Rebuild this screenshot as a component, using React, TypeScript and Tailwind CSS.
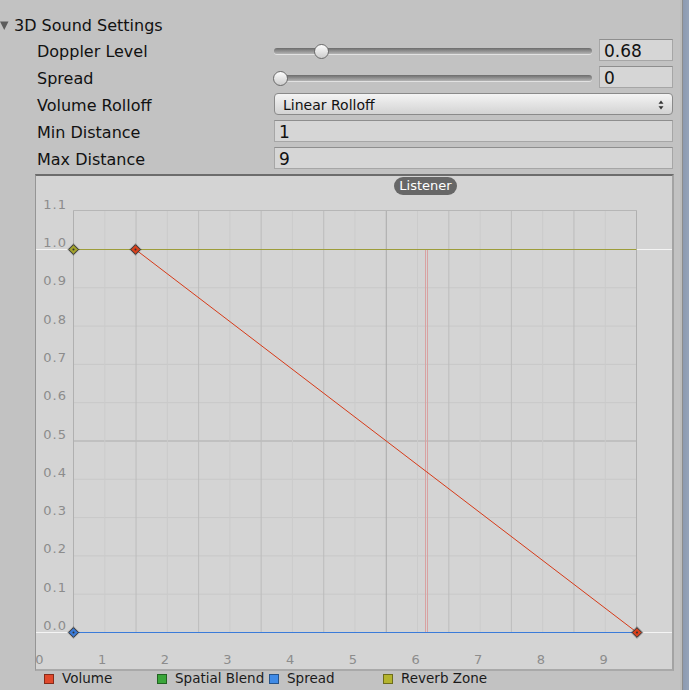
import React from "react";

const rows = [
  { label: "Doppler Level", kind: "slider", value: 0.68, max: 5, text: "0.68" },
  { label: "Spread", kind: "slider", value: 0, max: 360, text: "0" },
  { label: "Volume Rolloff", kind: "select", text: "Linear Rolloff" },
  { label: "Min Distance", kind: "field", text: "1" },
  { label: "Max Distance", kind: "field", text: "9" },
];

const legend = [
  { name: "Volume", color: "bg-[#e0492c]", w: "w-[113px]" },
  { name: "Spatial Blend", color: "bg-[#3aa63a]", w: "w-[112px]" },
  { name: "Spread", color: "bg-[#3f8ae6]", w: "w-[114px]" },
  { name: "Reverb Zone", color: "bg-[#b4b42e]", w: "w-[114px]" },
];

function Field({ text, className = "" }: { text: string; className?: string }) {
  return (
    <div
      className={`flex h-full items-center border border-[#a6a6a6] border-t-[#8e8e8e] bg-[#d6d6d6] pl-[4px] pt-[3px] text-[17px] text-[#111] ${className}`}
    >
      {text}
    </div>
  );
}

function Slider({ value, max, text }: { value: number; max: number; text: string }) {
  const left = (value / max) * 303 - 1;
  return (
    <div className="flex h-full items-center gap-[7px]">
      <div className="relative h-full w-[318px]">
        <div className="absolute left-0 right-0 top-[9px] h-[6px] rounded-full bg-gradient-to-b from-[#6c6c6c] to-[#b4b4b4] shadow-[0_1px_0_#e2e2e2]" />
        <div
          className="absolute top-[5px] h-[15px] w-[15px] rounded-full border border-[#6a6a6a] bg-gradient-to-b from-[#fdfdfd] to-[#cdcdcd]"
          style={{ left }}
        />
      </div>
      <Field text={text} className="w-[74px]" />
    </div>
  );
}

function Select({ text }: { text: string }) {
  return (
    <div className="flex h-full items-center justify-between rounded-[4px] border border-[#8a8a8a] bg-gradient-to-b from-[#f4f4f4] to-[#d3d3d3] pl-[8px] pr-[8px] text-[14px] text-[#111]">
      <span className="pt-[2px]">{text}</span>
      <svg width="6" height="10" viewBox="0 0 6 10" className="mt-[1px]">
        <path d="M3 0.5L5.5 3.8H0.5Z" fill="#333" />
        <path d="M3 9.5L5.5 6.2H0.5Z" fill="#333" />
      </svg>
    </div>
  );
}

function Key({ x, y, fill }: { x: number; y: number; fill: string }) {
  return (
    <g>
      <path d={`M${x} ${y - 6.5}L${x + 6.5} ${y}L${x} ${y + 6.5}L${x - 6.5} ${y}Z`} fill="#000" opacity={0.22} />
      <path
        d={`M${x} ${y - 4.8}L${x + 4.8} ${y}L${x} ${y + 4.8}L${x - 4.8} ${y}Z`}
        fill={fill}
        stroke="#333"
        strokeWidth={1}
      />
      <circle cx={x} cy={y} r={1} fill="#333" />
    </g>
  );
}

function Graph() {
  const L = 73.5;
  const R = 636.5;
  const Z = 632.5;
  const U = 38.3;
  const top = 210.5;
  const one = Z - 10 * U;
  const xs = Array.from({ length: 19 }, (_, i) => L + (i * (R - L)) / 18);
  const ys = Array.from({ length: 11 }, (_, k) => Z - k * U);

  return (
    <svg width="636" height="493" viewBox="36 176 636 493" className="block">
      {/* grid */}
      {ys.map((y, k) => (
        <line
          key={`h${k}`}
          x1={L}
          x2={R}
          y1={y}
          y2={y}
          stroke={k === 5 ? "#acacac" : "#c8c8c8"}
        />
      ))}
      {xs.map((x, i) => (
        <line
          key={`v${i}`}
          x1={x}
          x2={x}
          y1={top}
          y2={Z}
          stroke={i === 10 ? "#a9a9a9" : i % 2 === 0 ? "#bcbcbc" : "#cbcbcb"}
        />
      ))}
      <line x1={L} x2={R} y1={top} y2={top} stroke="#b6b6b6" />
      <line x1={L} x2={L} y1={top} y2={Z} stroke="#b0b0b0" />
      <line x1={R} x2={R} y1={top} y2={Z} stroke="#b0b0b0" />

      {/* axis labels */}
      {Array.from({ length: 12 }, (_, k) => (
        <text
          key={`yl${k}`}
          x={67}
          y={Z - k * U - 2.5}
          textAnchor="end"
          fill="#8c8c8c"
          fontSize={13}
          letterSpacing={1}
          fontFamily="DejaVu Sans, sans-serif"
        >
          {(k / 10).toFixed(1)}
        </text>
      ))}
      {Array.from({ length: 10 }, (_, k) => (
        <text
          key={`xl${k}`}
          x={39.5 + k * 62.67}
          y={664}
          textAnchor="middle"
          fill="#8c8c8c"
          fontSize={13}
          fontFamily="DejaVu Sans, sans-serif"
        >
          {k}
        </text>
      ))}

      {/* white extension lines */}
      <line x1={36} x2={L} y1={one} y2={one} stroke="#f4f4f4" />
      <line x1={R} x2={672} y1={one} y2={one} stroke="#f4f4f4" />
      <line x1={36} x2={L} y1={Z} y2={Z} stroke="#f4f4f4" />
      <line x1={R} x2={672} y1={Z} y2={Z} stroke="#f4f4f4" />

      {/* listener */}
      <line x1={425.5} x2={425.5} y1={one} y2={Z} stroke="#d8a2a2" />
      <line x1={427.5} x2={427.5} y1={one} y2={Z} stroke="#d8a2a2" />

      {/* curves */}
      <line x1={L} x2={R} y1={one} y2={one} stroke="#9d9d3a" />
      <line x1={L} x2={R} y1={Z} y2={Z} stroke="#3a7bd9" />
      <line x1={135.5} x2={637} y1={one} y2={Z} stroke="#d63a18" strokeWidth={1} />

      <Key x={73.5} y={one} fill="#a3a32c" />
      <Key x={135.5} y={one} fill="#d9401c" />
      <Key x={73.5} y={Z} fill="#3a7bd9" />
      <Key x={637} y={Z} fill="#d9401c" />
    </svg>
  );
}

export default function App() {
  return (
    <div className="flex h-[690px] w-[689px] overflow-hidden bg-[#c2c2c2] font-['DejaVu_Sans',sans-serif] text-[#111]">
      <div className="flex w-[680px] flex-col">
        <div className="mt-[13px] flex h-[24px] items-center">
          <svg width="9" height="9" viewBox="0 0 9 9">
            <path d="M0 0.5H8.5L4.25 9Z" fill="#5c5c5c" />
          </svg>
          <span className="ml-[5px] pt-[2px] text-[16px]">3D Sound Settings</span>
        </div>

        <div className="mt-[2px] flex flex-col gap-[5px]">
          {rows.map((r) => (
            <div key={r.label} className="flex h-[22px] items-center">
              <div className="w-[274px] pl-[37px] pt-[3px] text-[16px]">{r.label}</div>
              <div className="h-full w-[399px]">
                {r.kind === "slider" && <Slider value={r.value!} max={r.max!} text={r.text} />}
                {r.kind === "select" && <Select text={r.text} />}
                {r.kind === "field" && <Field text={r.text} />}
              </div>
            </div>
          ))}
        </div>

        <div className="relative ml-[35px] mt-[5px] w-[639px] border-b-2 border-l border-r-2 border-t-2 border-b-[#a9a9a9] border-l-[#959595] border-r-[#a3a3a3] border-t-[#6c6c6c] bg-[#d4d4d4]">
          <Graph />
          <div className="absolute left-[358px] top-[1px] flex h-[18px] w-[63px] items-center justify-center rounded-full bg-[#676767] text-[13px] text-white">
            Listener
          </div>
        </div>

        <div className="flex h-[15px] items-center pl-[44px] text-[13.5px] text-[#1a1a1a]">
          {legend.map((l) => (
            <div key={l.name} className={`flex items-center ${l.w}`}>
              <span className={`h-[10px] w-[10px] border border-black/40 ${l.color}`} />
              <span className="ml-[8px] whitespace-nowrap">{l.name}</span>
            </div>
          ))}
        </div>
      </div>
      <div className="w-[2px] bg-[#bcbcbc]" />
      <div className="w-[1px] bg-[#8c8c8c]" />
      <div className="flex-1 bg-gradient-to-r from-[#8c9ab1] to-[#95a3b9]" />
    </div>
  );
}
